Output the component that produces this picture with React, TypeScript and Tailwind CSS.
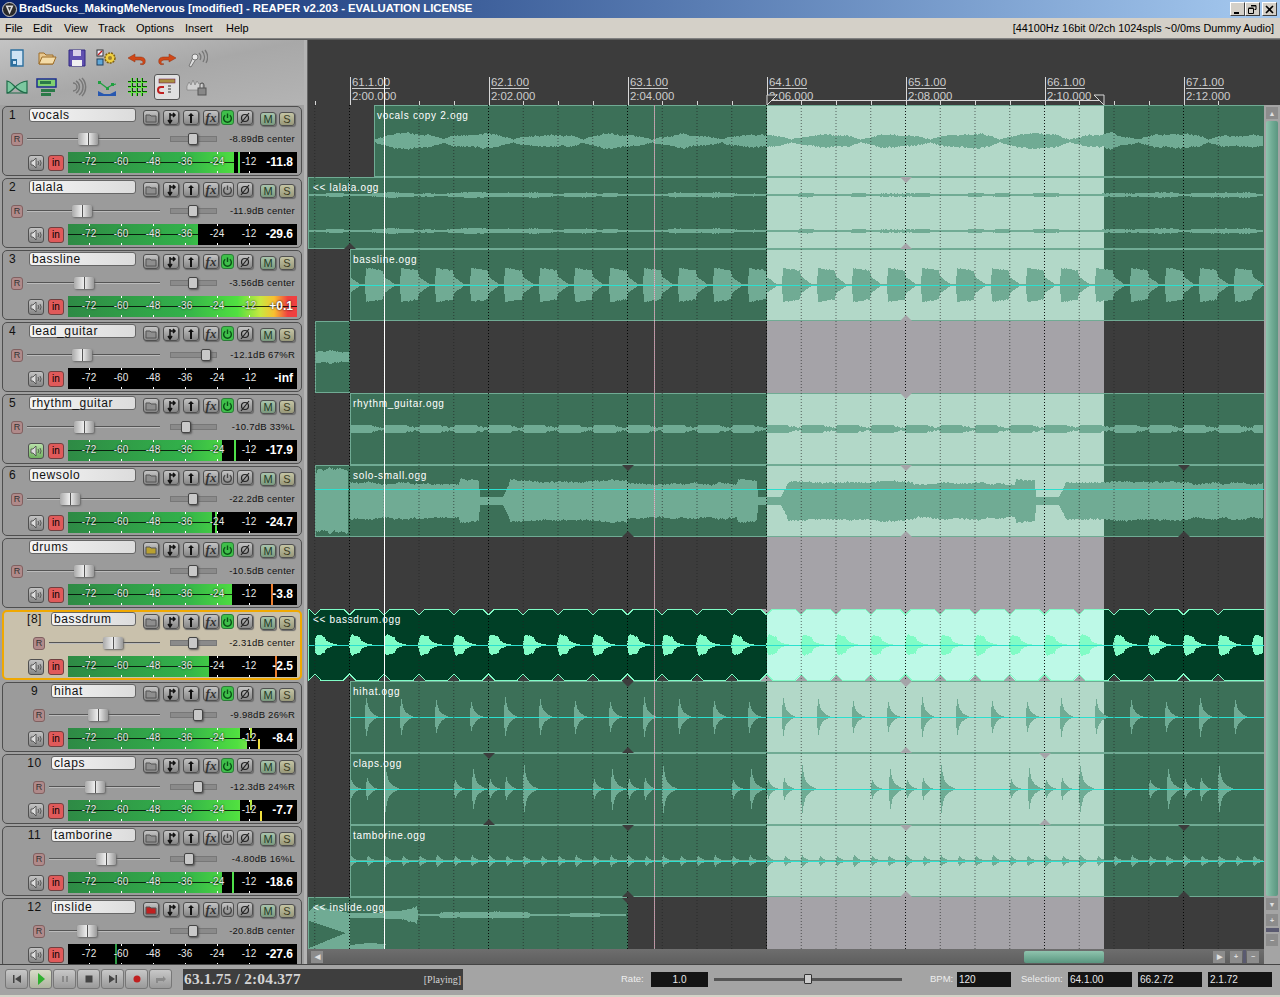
import type { ReactNode } from "react";

const X0 = 308;
const BEAT = 34.75;
const FIRST = 349.5;
const SEL_A = 767;
const SEL_B = 1104;

type Track = {
  n: number;
  name: string;
  child?: boolean;
  fader: number;
  pan: number;
  text: string;
  power: boolean;
  level: number;
  low?: number;
  peak?: number;
  peakColor?: string;
  peakTop?: number;
  value: string;
  hot?: boolean;
  folder?: string;
  spk?: boolean;
  sel?: boolean;
};

const tracks: Track[] = [
  { n: 1, name: "vocals", fader: 88, pan: 193, text: "-8.89dB center", power: true, level: 234, peak: 238, peakColor: "#4fe04a", value: "-11.8" },
  { n: 2, name: "lalala", fader: 82, pan: 193, text: "-11.9dB center", power: false, level: 198, value: "-29.6" },
  { n: 3, name: "bassline", fader: 84, pan: 193, text: "-3.56dB center", power: true, level: 297, value: "+0.1", hot: true },
  { n: 4, name: "lead_guitar", fader: 82, pan: 206, text: "-12.1dB 67%R", power: true, level: 68, value: "-inf" },
  { n: 5, name: "rhythm_guitar", fader: 84, pan: 186, text: "-10.7dB 33%L", power: true, level: 222, peak: 234, peakColor: "#4fe04a", value: "-17.9", spk: true },
  { n: 6, name: "newsolo", fader: 70, pan: 193, text: "-22.2dB center", power: false, level: 212, peak: 215, peakColor: "#4fe04a", value: "-24.7" },
  { n: 7, name: "drums", fader: 84, pan: 193, text: "-10.5dB center", power: true, level: 232, peak: 271, peakColor: "#f08030", value: "-3.8", folder: "#b8a030" },
  { n: 8, name: "bassdrum", child: true, fader: 113, pan: 193, text: "-2.31dB center", power: true, level: 209, peak: 275, peakColor: "#f08030", value: "-2.5", sel: true },
  { n: 9, name: "hihat", child: true, fader: 98, pan: 198, text: "-9.98dB 26%R", power: true, level: 240, low: 247, peak: 258, peakTop: 250, peakColor: "#f0e040", value: "-8.4" },
  { n: 10, name: "claps", child: true, fader: 95, pan: 198, text: "-12.3dB 24%R", power: true, level: 240, peak: 260, peakTop: 250, peakColor: "#f0e040", value: "-7.7" },
  { n: 11, name: "tamborine", child: true, fader: 106, pan: 189, text: "-4.80dB 16%L", power: false, level: 222, peak: 232, peakColor: "#4fe04a", value: "-18.6" },
  { n: 12, name: "inslide", child: true, fader: 87, pan: 193, text: "-20.8dB center", power: false, level: 68, peak: 115, peakColor: "#2e9a45", value: "-27.6", folder: "#c02020" },
];

const noise = (i: number) => {
  const s = Math.sin(i * 12.9898) * 43758.5453;
  return s - Math.floor(s);
};
const smooth = (x: number, w: number) => {
  const a = Math.floor(x / w);
  const f = x / w - a;
  const k = f * f * (3 - 2 * f);
  return noise(a) * (1 - k) + noise(a + 1) * k;
};
const phase = (x: number, start: number, period: number) => ((x - start) % period + period) % period;

type Wave = { cy: number; x0: number; x1: number; amp: (x: number) => number; jit?: number };

const wavePoints = (w: Wave) => {
  const top: string[] = [];
  const bot: string[] = [];
  for (let x = w.x0; x <= w.x1; x++) {
    const a = Math.max(0, w.amp(x));
    const j = w.jit ?? 0.2;
    top.push(`${x - X0},${Math.round(w.cy - a * (1 - j / 2 + j * noise(x)))}`);
    bot.unshift(`${x - X0},${Math.round(w.cy + a * (1 - j / 2 + j * noise(x + 500)))}`);
  }
  return [...top, ...bot].join(" ");
};

const vocal = (x: number) => {
  const p = phase(x, 374, 69.5);
  return 1 + 7 * Math.pow(Math.sin((Math.PI * p) / 69.5), 0.6) * (0.55 + 0.5 * smooth(x, 11));
};
const thin = (x: number) => 0.8 + 2 * smooth(x, 13);
const bass = (x: number) => {
  const p = phase(x, 366, BEAT);
  if (p < 18) return 17 - p * 0.15;
  if (p < 28) return 7 * (1 - (p - 18) / 10) + 1;
  return 1;
};
const rhythm = (x: number) => {
  const p = phase(x, 350, BEAT);
  return p < 22 ? 4 : p < 28 ? 2.5 : 1.5;
};
const solo = (x: number) => {
  const p = phase(x, 350, 278);
  if (p < 110) return 16 + 3 * smooth(x, 9);
  if (p < 130) return 22 - (p - 110) * 0.1;
  if (p < 153) return 4;
  if (p < 160) return 4 + (p - 153) * 2;
  return 18 + 3 * smooth(x, 17);
};
const kick = (x: number) => {
  const p = phase(x, 314.75, BEAT);
  if (p < 2) return 5 + p * 3;
  if (p < 11) return 11 - p * 0.3;
  if (p < 24) return 4 * Math.pow(1 - (p - 11) / 13, 2) + 0.4;
  return 0;
};
const hit = (p: number, a: number, len: number) => {
  if (p < 0 || p > len) return 0;
  return a * Math.exp(-p / 2.4) + (a * 0.22 * (len - p)) / len;
};
const hihat = (x: number) => hit(phase(x, 366, BEAT), 19, 13);
const clapAt = [0, 18, 87.5, 105.5, 122.5];
const claps = (x: number) => {
  const p = phase(x, 367, 139);
  let v = 0;
  for (const c of clapAt) {
    const small = c === 0 || c === 87.5 || c === 122.5;
    v = Math.max(v, hit(p - c, small ? 11 : 23, small ? 11 : 15));
  }
  return v;
};
const tamb = (x: number) => {
  const p = phase(x, 350, BEAT / 2);
  return 0.6 + 6 * Math.exp(-p / 3);
};
const inslide = (x: number) => {
  if (x < 384) return 2;
  if (x < 400) return 4;
  if (x < 418) return 4 + (x - 400) * 0.25;
  if (x < 440) return 1;
  if (x < 530) return 2.5 + smooth(x, 9);
  if (x < 570) return 0.6;
  if (x < 600) return 2;
  return 0.6;
};

const laneData: {
  item?: { x: number; label: string; end?: number };
  waves: Wave[];
  center?: number;
  sel?: boolean;
}[] = [
  { item: { x: 374, label: "vocals copy 2.ogg" }, waves: [{ cy: 36, x0: 374, x1: 1263, amp: vocal, jit: 0.3 }] },
  {
    item: { x: 308, label: "<< lalala.ogg" },
    waves: [
      { cy: 18, x0: 308, x1: 1263, amp: thin },
      { cy: 54, x0: 308, x1: 1263, amp: thin },
    ],
  },
  { item: { x: 350, label: "bassline.ogg" }, center: 36, waves: [{ cy: 36, x0: 350, x1: 1263, amp: bass, jit: 0.08 }] },
  { item: { x: 315, end: 350, label: "" }, waves: [{ cy: 36, x0: 315, x1: 349, amp: (x) => 4 + 3 * smooth(x, 6) }] },
  { item: { x: 350, label: "rhythm_guitar.ogg" }, waves: [{ cy: 36, x0: 350, x1: 1263, amp: rhythm, jit: 0.15 }] },
  {
    item: { x: 315, label: "" },
    center: 24,
    waves: [
      { cy: 36, x0: 315, x1: 348, amp: (x) => 30 + 4 * smooth(x, 5), jit: 0.15 },
      { cy: 36, x0: 350, x1: 1263, amp: solo, jit: 0.1 },
    ],
  },
  { waves: [] },
  { item: { x: 308, label: "<< bassdrum.ogg" }, center: 36, sel: true, waves: [{ cy: 36, x0: 315, x1: 1263, amp: kick, jit: 0.12 }] },
  { item: { x: 350, label: "hihat.ogg" }, center: 36, waves: [{ cy: 36, x0: 350, x1: 1263, amp: hihat, jit: 0.1 }] },
  { item: { x: 350, label: "claps.ogg" }, center: 36, waves: [{ cy: 36, x0: 350, x1: 1263, amp: claps, jit: 0.1 }] },
  { item: { x: 350, label: "tamborine.ogg" }, center: 36, waves: [{ cy: 36, x0: 350, x1: 1263, amp: tamb, jit: 0.1 }] },
  { item: { x: 308, end: 628, label: "<< inslide.ogg" }, waves: [{ cy: 18, x0: 350, x1: 626, amp: inslide }] },
];

const beats: number[] = [];
for (let i = -1; i < 26; i++) beats.push(FIRST + i * BEAT);

// little fade handles on the item edges: [x, y, up?]
const notches: [number, number, boolean][] = [
  [350, 72, true], [350, 144, true], [906, 144, true], [906, 72, false], [906, 216, true], [906, 288, false],
  [628, 360, false], [906, 360, false], [1184, 360, false], [628, 432, true], [906, 432, true], [1184, 432, true],
  [628, 576, false], [906, 576, false], [628, 648, true], [906, 648, true], [489, 648, false], [1045, 648, false],
  [489, 720, true], [1045, 720, true], [628, 720, false], [906, 720, false], [1184, 720, false], [628, 792, true],
  [906, 792, true], [1184, 792, true], [628, 793, false],
];

function Lane({ index }: { index: number }) {
  const lane = laneData[index];
  const item = lane.item;
  const end = item?.end ?? 1264;
  const start = item?.x ?? 0;
  const sa = Math.max(SEL_A, start);
  const sb = Math.min(SEL_B, end);
  const light = lane.sel ? "#bdf9e7" : "#b2d8c8";
  return (
    <div className="relative h-[72px] w-[956px] shrink-0 overflow-hidden">
      <div className="absolute top-0 bottom-0 left-[459px] w-[337px] bg-[#a5a3a8]" />
      {item && (
        <div
          className={`absolute top-0 h-[72px] border-y border-l ${lane.sel ? "bg-[#003f26] border-[#80fcc6]" : "bg-[#3c7058] border-[#70ab94]"}`}
          style={{ left: start - X0, width: end - start }}
        />
      )}
      {item && sb > sa && (
        <div
          className={`absolute top-0 h-[72px] border-y ${lane.sel ? "border-[#80fcc6]" : "border-[#70ab94]"}`}
          style={{ left: sa - X0, width: sb - sa, backgroundColor: light }}
        />
      )}
      <svg className="absolute inset-0" width={956} height={72} shapeRendering="crispEdges">
        {lane.waves.map((w, i) => (
          <polygon key={i} points={wavePoints(w)} fill={lane.sel ? "#80fcc6" : "#70ab94"} />
        ))}
        {lane.center !== undefined && item && (
          <line x1={start - X0} x2={956} y1={lane.center + 0.5} y2={lane.center + 0.5} stroke="#2be0d0" strokeWidth={1} />
        )}
        {index === 11 && (
          <g fill="#70ab94">
            <polygon points="1,14 8,8 20,12 42,16 42,25 38,36 1,24" />
            <polygon points="1,51 38,36 42,24 42,52 1,52" />
            <polygon points="42,48 60,46 78,47 76,52 42,52" />
            <polygon points="42,16 76,16 76,21 42,21" />
          </g>
        )}
        {lane.sel &&
          beats.map((b) => {
            const bg = b > SEL_A - 1 && b < SEL_B + 1 ? "#a5a3a8" : "#3c3c3c";
            const x = b - X0;
            return (
              <g key={b}>
                <polygon points={`${x - 6},0 ${x + 6},0 ${x},6`} fill={bg} />
                <polygon points={`${x - 6},72 ${x + 6},72 ${x},66`} fill={bg} />
                <polyline points={`${x - 6},0 ${x},6 ${x + 6},0`} fill="none" stroke="#80fcc6" />
                <polyline points={`${x - 6},71 ${x},65 ${x + 6},71`} fill="none" stroke="#80fcc6" />
              </g>
            );
          })}
      </svg>
      {item && item.label && (
        <span
          className="absolute top-[4px] text-[10px] leading-[13px] tracking-[0.68px] text-white whitespace-nowrap"
          style={{ left: start - X0 + (item.x === 308 ? 5 : 3) }}
        >
          {item.label}
        </span>
      )}
      {index === 5 && (
        <span className="absolute top-[4px] left-[45px] text-[10px] leading-[13px] tracking-[0.68px] text-white whitespace-nowrap">
          solo-small.ogg
        </span>
      )}
    </div>
  );
}

function GridOverlay() {
  return (
    <svg className="absolute inset-0 pointer-events-none" width={956} height={844}>
      {beats.map((b, i) => (
        <line
          key={b}
          x1={b - X0}
          x2={b - X0}
          y1={0}
          y2={844}
          stroke={(i - 1) % 4 === 0 ? "#000" : "#222"}
          strokeOpacity={(i - 1) % 4 === 0 ? 0.9 : 0.65}
          strokeDasharray="1 2"
        />
      ))}
      {notches.map(([x, y, up], i) => {
        const fill = x > SEL_A && x < SEL_B ? "#a5a3a8" : "#3c3c3c";
        const px = x - X0;
        return (
          <polygon
            key={i}
            fill={fill}
            points={up ? `${px - 6},${y} ${px + 6},${y} ${px},${y - 6}` : `${px - 6},${y} ${px + 6},${y} ${px},${y + 6}`}
          />
        );
      })}
      <line x1={346.5} x2={346.5} y1={0} y2={844} stroke="#d08aa4" strokeDasharray="1 1" />
      <line x1={346.5} x2={346.5} y1={0} y2={844} stroke="#e8e8e8" strokeDasharray="1 1" strokeDashoffset={1} strokeOpacity={0.6} />
      <line x1={76.5} x2={76.5} y1={0} y2={844} stroke="#fff" />
    </svg>
  );
}

function Ruler() {
  const measures = [0, 1, 2, 3, 4, 5, 6];
  return (
    <div className="relative h-[65px] bg-[#3c3c3c] text-[#cccccc] text-[11.4px] leading-[12px]">
      {measures.map((m) => (
        <div key={m} className="absolute top-[36px]" style={{ left: 44 + m * 139 }}>
          <div className="border-b border-[#cccccc] w-fit">{`${61 + m}.1.00`}</div>
          <div className="mt-[1px]">{`2:${String(m * 2).padStart(2, "0")}.000`}</div>
        </div>
      ))}
      <svg className="absolute inset-0" width={972} height={65} shapeRendering="crispEdges">
        {beats.map((b, i) =>
          (i - 1) % 4 === 0 ? (
            <line key={b} x1={b - X0 + 0.5} x2={b - X0 + 0.5} y1={37} y2={65} stroke="#d8d8d8" />
          ) : (
            <line key={b} x1={b - X0 + 0.5} x2={b - X0 + 0.5} y1={61} y2={65} stroke="#d8d8d8" />
          ),
        )}
        <line x1={76.5} x2={76.5} y1={37} y2={65} stroke="#fff" />
        <line x1={459} x2={796} y1={60.5} y2={60.5} stroke="#d8d8d8" />
        <polygon points="796,65 786,55 796,55" fill="#3c3c3c" stroke="#d8d8d8" shapeRendering="auto" />
        <polygon points="459,65 469,55 459,55" fill="#3c3c3c" stroke="#d8d8d8" shapeRendering="auto" />
      </svg>
    </div>
  );
}

function Btn({ className = "", children }: { className?: string; children?: ReactNode }) {
  return (
    <div
      className={`flex h-[15px] w-[16px] shrink-0 items-center justify-center rounded-[3px] border border-[#505050] bg-gradient-to-b from-[#c4c4c4] to-[#868686] shadow-[1px_1px_1px_#6a6a6a] ${className}`}
    >
      {children}
    </div>
  );
}

const icon12 = { width: 12, height: 12, viewBox: "0 0 12 12" };

function TrackPanel({ t }: { t: Track }) {
  const left = t.child ? 22 : 0;
  const faderW = t.child ? 111 : 133;
  const faderStart = t.child ? 49 : 27;
  return (
    <div className="h-[72px] shrink-0 px-[2px] pt-[1px]">
      <div
        className={`relative h-[70px] w-[300px] rounded-[5px] ${
          t.sel ? "border-2 border-[#f0a800] bg-[#c9c1ac]" : "border border-[#4e4e4e] p-px bg-[#9b9b9b]"
        }`}
      >
        <div className="flex h-[18px] items-start">
          <div className={`shrink-0 text-[12px] leading-[15px] text-[#111] tracking-[0.5px] ${t.child ? "w-[47px] text-center pl-[14px]" : "w-[25px] pl-[5px]"}`}>
            {t.sel ? `[${t.n}]` : t.n === 7 ? "" : t.n}
          </div>
          <div
            className={`h-[14px] shrink-0 rounded-[3px] border border-[#666] bg-gradient-to-r from-[#f4f4f4] to-[#dcdcdc] pl-[2px] text-[12px] leading-[12px] tracking-[0.6px] text-[#111] ${t.child ? "w-[85px]" : "w-[107px]"}`}
          >
            {t.name}
          </div>
          <div className="flex items-start pt-[2px]">
            <Btn className="ml-[7px]">
              <svg {...icon12}>
                <path d="M1 3h4l1 1h5v6H1z" fill={t.folder ?? "#8e8e8e"} stroke="#555" />
              </svg>
            </Btn>
            <Btn className="ml-[4px]">
              <svg {...icon12}>
                <path d="M5 1v9M3 8l2 3 2-3M5 3h5M8 1l2 2-2 2" fill="none" stroke="#111" strokeWidth="1.5" />
              </svg>
            </Btn>
            <Btn className="ml-[4px]">
              <svg {...icon12}>
                <path d="M6 1l3 3H7v7H5V4H3z" fill="#111" />
              </svg>
            </Btn>
            <Btn className="ml-[4px]">
              <span className="font-['Liberation_Serif',serif] text-[13px] italic font-bold leading-none text-[#333]">fx</span>
            </Btn>
            <div
              className={`ml-[2px] flex h-[15px] w-[13px] shrink-0 items-center justify-center rounded-[3px] border ${
                t.power ? "border-[#2c7a38] bg-[#3fc04a]" : "border-[#505050] bg-gradient-to-b from-[#c4c4c4] to-[#868686]"
              }`}
            >
              <svg width={12} height={12} viewBox="0 0 12 12">
                <path d="M3.5 3a4.2 4.2 0 1 0 5 0M6 1v5" fill="none" stroke={t.power ? "#0b4d16" : "#444"} strokeWidth="1.5" />
              </svg>
            </div>
            <Btn className="ml-[3px]">
              <svg {...icon12}>
                <circle cx="6" cy="6" r="3.5" fill="none" stroke="#222" strokeWidth="1.2" />
                <path d="M2 11L10 1" stroke="#222" strokeWidth="1.2" />
              </svg>
            </Btn>
            <Btn className="ml-[7px] mt-[2px] !h-[14px] !from-[#a8c4ac] !to-[#7a987e]">
              <span className="text-[11px] leading-none text-[#1f3a24]">M</span>
            </Btn>
            <Btn className="ml-[3px] mt-[2px] !h-[14px] !from-[#c4c4a4] !to-[#98987a]">
              <span className="text-[11px] leading-none text-[#3a3a1f]">S</span>
            </Btn>
          </div>
        </div>
        <div className="mt-[6px] flex h-[14px] items-center">
          <div
            className="flex h-[13px] w-[12px] shrink-0 items-center justify-center rounded-[3px] border border-[#806060] bg-[#b08a8a] text-[9px] leading-none text-[#333]"
            style={{ marginLeft: 7 + left }}
          >
            R
          </div>
          <div className="relative ml-[4px] flex h-[14px] shrink-0 items-center" style={{ width: faderW }}>
            <div className="h-[2px] w-full bg-[#555] border-b border-[#bbb]" />
            <div
              className="absolute top-[1px] h-[12px] w-[20px] rounded-[2px] bg-gradient-to-r from-[#aaa] via-[#f0f0f0] to-[#999] shadow-[1px_1px_2px_#666]"
              style={{ left: t.fader - faderStart - 10 }}
            >
              <div className="mx-auto h-full w-px bg-[#555]" />
            </div>
          </div>
          <div className="relative ml-[10px] h-[6px] w-[47px] shrink-0 border border-[#777] bg-[#8a8a8a]">
            <div
              className="absolute -top-[4px] h-[12px] w-[10px] rounded-[2px] border border-[#444] bg-[#c8c8c8] shadow-[1px_1px_2px_#555]"
              style={{ left: t.pan - 170 - 6 }}
            />
          </div>
          <div className="flex-1 pr-[5px] text-right text-[9.5px] tracking-[0.25px] text-[#111] whitespace-nowrap">{t.text}</div>
        </div>
        <div className="mt-[6px] flex h-[21px] items-center">
          <div
            className={`ml-[24px] flex h-[16px] w-[16px] shrink-0 items-center justify-center rounded-[3px] border border-[#505050] bg-gradient-to-b ${
              t.spk ? "from-[#b8e0a8] to-[#70b060]" : "from-[#c4c4c4] to-[#868686]"
            }`}
          >
            <svg {...icon12}>
              <path d="M1 4h2l3-3v10L3 8H1z" fill="#ddd" stroke="#444" strokeWidth=".8" />
              <path d="M8 4a3 3 0 0 1 0 4M10 3a5 5 0 0 1 0 6" fill="none" stroke="#444" strokeWidth=".8" />
            </svg>
          </div>
          <div className="ml-[4px] flex h-[16px] w-[16px] shrink-0 items-center justify-center rounded-[3px] border border-[#704040] bg-[#e05a5a] text-[10px] leading-none text-black">
            in
          </div>
          <Meter t={t} />
        </div>
      </div>
    </div>
  );
}

const meterLabels = ["-72", "-60", "-48", "-36", "-24", "-12"];

function Meter({ t }: { t: Track }) {
  const w = t.level - 68;
  const hotBg = "bg-[linear-gradient(to_right,#2e8a45_0%,#32b04a_50%,#50e040_74%,#c8e840_84%,#f8c030_90%,#f04040_96%)]";
  const bg = "bg-[linear-gradient(to_right,#2e8a45_0%,#32b04a_50%,#50e040_74%,#90e850_82%,#d8e840_90%)]";
  return (
    <div className="relative ml-[4px] h-[21px] w-[229px] shrink-0 overflow-hidden bg-black">
      <div className="absolute left-0 top-0 h-full overflow-hidden" style={{ width: w }}>
        <div className={`h-full w-[229px] ${t.hot ? hotBg : bg}`} />
        <div className="absolute left-0 right-0 top-[10px] h-px bg-black/80" />
      </div>
      {t.low && (
        <div className="absolute bottom-0 left-0 h-[10px] overflow-hidden" style={{ width: t.low - 68 }}>
          <div className={`h-full w-[229px] ${bg}`} />
        </div>
      )}
      {t.peak && !t.peakTop && (
        <div className="absolute top-0 h-full w-[2px]" style={{ left: t.peak - 68, backgroundColor: t.peakColor }} />
      )}
      {t.peak && t.peakTop && (
        <>
          <div className="absolute bottom-0 h-[10px] w-[2px]" style={{ left: t.peak - 68, backgroundColor: t.peakColor }} />
          <div className="absolute top-0 h-[10px] w-[2px] bg-[#b8e840]" style={{ left: t.peakTop - 68 }} />
        </>
      )}
      {meterLabels.map((l, i) => (
        <div key={l} className="absolute inset-y-0 w-[24px]" style={{ left: 9 + i * 32 }}>
          <div className="absolute left-[12px] top-0 h-[2px] w-px bg-white" />
          <div className="absolute bottom-0 left-[12px] h-[2px] w-px bg-white" />
          <div className="absolute inset-x-0 top-[4px] text-center text-[10px] leading-[12px] text-[#e8e8e8] [text-shadow:0_0_2px_#000]">{l}</div>
        </div>
      ))}
      <div className="absolute right-[4px] top-[3px] text-[12px] font-bold leading-[14px] text-white [text-shadow:0_0_2px_#000]">{t.value}</div>
    </div>
  );
}

function ToolIcon({ i }: { i: number }) {
  const s = { width: 22, height: 22, viewBox: "0 0 22 22" };
  switch (i) {
    case 0:
      return (
        <svg {...s}>
          <path d="M5 3h12v16H5z" fill="#cfe3f4" stroke="#2d6f9e" strokeWidth="1.4" />
          <path d="M5 12h6v7H5z" fill="#2d6f9e" />
          <path d="M7 14h3v3H7z" fill="#cfe3f4" />
        </svg>
      );
    case 1:
      return (
        <svg {...s}>
          <path d="M3 17V6h5l2 2h7v9z" fill="#e8c890" stroke="#9c6c28" />
          <path d="M3 17l3-7h14l-3 7z" fill="#f4dca8" stroke="#9c6c28" />
        </svg>
      );
    case 2:
      return (
        <svg {...s}>
          <path d="M3 3h16v16H3z" fill="#6050b0" stroke="#302880" />
          <path d="M7 3h8v6H7z" fill="#d8d0e8" />
          <path d="M6 13h10v6H6z" fill="#f0f0f0" />
        </svg>
      );
    case 3:
      return (
        <svg {...s}>
          <rect x="1" y="3" width="6" height="6" fill="#eef" stroke="#333" />
          <path d="M2 8l4-4" stroke="#c02020" strokeWidth="1.5" />
          <rect x="1" y="12" width="6" height="6" fill="#60a8d8" stroke="#204060" />
          <circle cx="14" cy="11" r="5" fill="#f0d040" stroke="#806010" strokeWidth="1.5" strokeDasharray="2 1" />
          <circle cx="14" cy="11" r="2" fill="#a08030" />
        </svg>
      );
    case 4:
      return (
        <svg {...s}>
          <path d="M2 11l7-4v3h5c4 0 6 2 5 6-1 2-3 2-5 1 2 0 3-1 3-2s-2-2-3-2H9v2z" fill="#d04818" stroke="#903010" strokeWidth=".5" />
        </svg>
      );
    case 5:
      return (
        <svg {...s}>
          <path d="M20 11l-7-4v3H8c-4 0-6 2-5 6 1 2 3 2 5 1-2 0-3-1-3-2s2-2 3-2h5v2z" fill="#d04818" stroke="#903010" strokeWidth=".5" />
        </svg>
      );
    case 6:
      return (
        <svg {...s}>
          <path d="M3 19l4-9 3 2-5 8z" fill="#ddd" stroke="#777" />
          <circle cx="9" cy="10" r="3" fill="#e8e8e8" stroke="#777" />
          <path d="M13 6a6 6 0 0 1 1 7M16 4a9 9 0 0 1 1 11M19 3a12 12 0 0 1 1 13" fill="none" stroke="#777" strokeWidth="1.3" />
        </svg>
      );
    case 7:
      return (
        <svg {...s}>
          <path d="M1 5c7 1 8 11 20 12V5c-12 1-13 11-20 12z" fill="#7cc8a0" stroke="#1f6a48" strokeWidth="1.2" />
          <path d="M1 17h20" stroke="#1f6a48" />
        </svg>
      );
    case 8:
      return (
        <svg {...s}>
          <rect x="1" y="3" width="19" height="8" fill="#80d070" stroke="#1c2c90" strokeWidth="1.5" />
          <rect x="4" y="5" width="11" height="3" fill="#2a7a48" />
          <rect x="5" y="13" width="14" height="3" fill="#2a7a48" />
          <rect x="5" y="17" width="10" height="3" fill="#2a7a48" />
        </svg>
      );
    case 9:
      return (
        <svg {...s}>
          <path d="M10 5a7 7 0 0 1 0 12M13 3a10 10 0 0 1 0 16M7 7a4 4 0 0 1 0 8M16 2a13 13 0 0 1 0 18" fill="none" stroke="#777" strokeWidth="1.5" />
        </svg>
      );
    case 10:
      return (
        <svg {...s}>
          <path d="M2 15l6 3 6 0 6-3v5H2z" fill="#2858b0" />
          <path d="M3 6l8 6 5-3 4-1" fill="none" stroke="#20a040" strokeWidth="1.2" />
          <rect x="2" y="5" width="3" height="3" fill="#20a040" />
          <rect x="10" y="11" width="3" height="3" fill="#20a040" />
          <rect x="15" y="7" width="3" height="3" fill="#20a040" />
        </svg>
      );
    case 11:
      return (
        <svg {...s} shapeRendering="crispEdges">
          <path d="M5.5 2v18M10.5 2v18M15.5 2v18M1.5 6h19M1.5 11h19M1.5 16h19" stroke="#0a4a0a" strokeWidth="2" />
          <path d="M5.5 2v18M10.5 2v18M15.5 2v18M1.5 6h19M1.5 11h19M1.5 16h19" stroke="#60e040" strokeWidth="1" />
        </svg>
      );
    case 12:
      return (
        <div className="flex h-[26px] w-[26px] items-center justify-center rounded-[3px] border border-[#555] bg-[#e0e0e0]">
          <svg width={20} height={20} viewBox="0 0 20 20">
            <rect x="2" y="2" width="16" height="4" fill="#a89040" stroke="#604" strokeWidth=".5" />
            <path d="M4 9a4 4 0 0 0 0 8h3v-2H4a2 2 0 0 1 0-4h3V9z" fill="#c02020" />
            <path d="M11 9h3M11 12h3M11 15h3" stroke="#333" />
          </svg>
        </div>
      );
    default:
      return (
        <svg {...s}>
          <path d="M1 10l2-4 2 3 2-5 2 5 2-4 2 3 4-1v7H1z" fill="#d0d0d0" stroke="#777" strokeWidth=".6" />
          <rect x="12" y="12" width="8" height="7" fill="#888" stroke="#555" />
          <path d="M14 12V9a2 2 0 0 1 4 0v3" fill="none" stroke="#555" />
        </svg>
      );
  }
}

function Transport({ children, lit }: { children: ReactNode; lit?: boolean }) {
  return (
    <div
      className={`flex h-[20px] w-[23px] items-center justify-center rounded-[3px] border border-[#777] bg-gradient-to-b ${
        lit ? "from-[#d8dcc8] to-[#aeb4a0]" : "from-[#c8c8c8] to-[#9a9a9a]"
      }`}
    >
      <svg width={12} height={12} viewBox="0 0 12 12">
        {children}
      </svg>
    </div>
  );
}

const ScrollBtn = ({ children }: { children: ReactNode }) => (
  <div className="flex h-[12px] w-[12px] shrink-0 items-center justify-center bg-[#8c8c8c] text-[7px] font-bold leading-none text-[#e0e0e0]">
    {children}
  </div>
);

function BlackBox({ w, center, children }: { w: string; center?: boolean; children: ReactNode }) {
  return (
    <div className={`flex h-[15px] items-center bg-[#141414] text-[10px] text-[#e8e8e8] ${w} ${center ? "justify-center" : "pl-[2px]"}`}>
      {children}
    </div>
  );
}

export default function App() {
  return (
    <div className="flex h-[997px] w-[1280px] flex-col overflow-hidden bg-[#a4a4a4] font-['Liberation_Sans',sans-serif]">
      <div className="flex h-[18px] shrink-0 items-center bg-gradient-to-r from-[#0a246a] to-[#a6caf0] pl-[2px]">
        <svg width={15} height={15} viewBox="0 0 15 15">
          <circle cx="7.5" cy="7.5" r="7" fill="#2a2a2a" stroke="#ccc" />
          <path d="M3.5 3.5l8 0-4 9z" fill="#ddd" />
          <path d="M6 5l3 0-1.5 4z" fill="#444" />
        </svg>
        <span className="ml-[2px] text-[11.35px] font-bold leading-none text-white whitespace-nowrap">
          BradSucks_MakingMeNervous [modified] - REAPER v2.203 - EVALUATION LICENSE
        </span>
        <div className="ml-auto mr-[3px] flex items-center">
          {["min", "max", "close"].map((b) => (
            <div
              key={b}
              className={`flex h-[14px] w-[15px] items-center justify-center border border-t-white border-l-white border-r-[#404040] border-b-[#404040] bg-[#d4d0c8] ${b === "close" ? "ml-[2px]" : ""}`}
            >
              <svg width={9} height={9} viewBox="0 0 9 9">
                {b === "min" && <path d="M1 7h5v2H1z" fill="#000" />}
                {b === "max" && <path d="M3 .5h5v4H6.5M.5 3.5h5v5h-5z M.5 3h5 M3 1h5" fill="none" stroke="#000" />}
                {b === "close" && <path d="M1 1l7 7M8 1L1 8" stroke="#000" strokeWidth="1.6" />}
              </svg>
            </div>
          ))}
        </div>
      </div>

      <div className="flex h-[21px] shrink-0 items-center justify-between border-b border-[#808080] bg-[#d4d0c8] pl-[5px] pr-[6px] text-[11px] text-black">
        <div className="flex">
          {[
            ["File", "w-[28px]"],
            ["Edit", "w-[31px]"],
            ["View", "w-[34px]"],
            ["Track", "w-[38px]"],
            ["Options", "w-[49px]"],
            ["Insert", "w-[41px]"],
            ["Help", "w-[30px]"],
          ].map(([m, w]) => (
            <span key={m} className={w}>
              {m}
            </span>
          ))}
        </div>
        <span className="text-[10.85px]">[44100Hz 16bit 0/2ch 1024spls ~0/0ms Dummy Audio]</span>
      </div>

      <div className="flex h-[925px] shrink-0 border-t border-[#5a5a5a]">
        <div className="flex h-full w-[304px] shrink-0 flex-col overflow-hidden bg-[#a0a0a0]">
          <div className="h-[65px] shrink-0 bg-gradient-to-br from-[#c4c4c4] via-[#a8a8a8] to-[#b4b4b4] pl-[2px] pt-[3px]">
            <div className="grid grid-cols-[repeat(7,30px)]">
              {[0, 1, 2, 3, 4, 5, 6, 7, 8, 9, 10, 11, 12, 13].map((i) => (
                <div key={i} className="flex h-[29px] items-center justify-center">
                  <ToolIcon i={i} />
                </div>
              ))}
            </div>
          </div>
          {tracks.map((t) => (
            <TrackPanel key={t.n} t={t} />
          ))}
        </div>
        <div className="w-[4px] shrink-0 bg-[#b4b4b4] border-r border-[#666]" />

        <div className="flex w-[972px] shrink-0 flex-col">
          <Ruler />
          <div className="flex h-[844px] shrink-0">
            <div className="relative h-[844px] w-[956px] shrink-0 overflow-hidden bg-[#3c3c3c]">
              {laneData.map((_, i) => (
                <Lane key={i} index={i} />
              ))}
              <GridOverlay />
            </div>
            <div className="flex w-[16px] shrink-0 flex-col items-center bg-[#a4a4a4] pt-[2px]">
              <ScrollBtn>▲</ScrollBtn>
              <div className="mt-[2px] w-[12px] flex-1 rounded-[2px] bg-gradient-to-r from-[#8fc4ae] via-[#70ab94] to-[#5a9680]" />
              <div className="mt-[2px]">
                <ScrollBtn>▼</ScrollBtn>
              </div>
              <div className="mt-[4px]">
                <ScrollBtn>+</ScrollBtn>
              </div>
              <div className="my-[2px] h-[4px] w-[13px] bg-[#5a5a70]" />
              <ScrollBtn>−</ScrollBtn>
              <div className="h-[3px]" />
            </div>
          </div>
          <div className="flex h-[15px] shrink-0">
            <div className="flex w-[956px] shrink-0 items-center bg-gradient-to-b from-[#6e6e6e] to-[#5e5e5e] pl-[3px]">
              <ScrollBtn>◀</ScrollBtn>
              <div className="ml-[701px] h-[12px] w-[80px] rounded-[2px] bg-gradient-to-b from-[#8fc4ae] to-[#5a9680]" />
              <div className="ml-[109px]">
                <ScrollBtn>▶</ScrollBtn>
              </div>
              <div className="ml-[5px]">
                <ScrollBtn>+</ScrollBtn>
              </div>
              <div className="mx-[1px] h-[13px] w-[3px] bg-[#5a5a70]" />
              <ScrollBtn>−</ScrollBtn>
            </div>
            <div className="flex-1 bg-[#a4a4a4]" />
          </div>
        </div>
      </div>

      <div className="flex flex-1 items-center border-t border-[#444] bg-[#a4a4a4] pb-[2px] pl-[5px] border-b-2 border-b-[#d4d4c8]">
        <div className="flex w-[168px] shrink-0 gap-px">
          <Transport>
            <path d="M2 2h1.5v8H2zM10 2v8L4 6z" fill="#444" />
          </Transport>
          <Transport lit>
            <path d="M3 0v12l7-6z" fill="#30b030" />
          </Transport>
          <Transport>
            <path d="M3 3h2v6H3zM7 3h2v6H7z" fill="#8a8a8a" />
          </Transport>
          <Transport>
            <path d="M2.5 2.5h7v7h-7z" fill="#444" />
          </Transport>
          <Transport>
            <path d="M2 2v8l6-4zM8.5 2H10v8H8.5z" fill="#444" />
          </Transport>
          <Transport>
            <circle cx="6" cy="6" r="3.5" fill="#c02020" />
          </Transport>
          <Transport>
            <path d="M1 5h7V3l3 3-3 3V8H3v2H1z" fill="#8a8a8a" />
          </Transport>
        </div>
        <div className="ml-[10px] flex h-[21px] w-[280px] shrink-0 items-center justify-between bg-[#3e3e3e] pr-[2px] font-['Liberation_Serif',serif]">
          <span className="pl-[1px] text-[15.4px] font-bold tracking-[0.2px] text-[#d4d4d4]">63.1.75 / 2:04.377</span>
          <span className="text-[10px] text-[#d4d4d4]">[Playing]</span>
        </div>
        <span className="ml-[158px] w-[30px] text-[9.5px] text-[#eee]">Rate:</span>
        <BlackBox w="w-[57px]" center>
          1.0
        </BlackBox>
        <div className="relative ml-[6px] h-[3px] w-[188px] shrink-0 bg-[#555]">
          <div className="absolute -top-[4px] left-[90px] h-[10px] w-[8px] rounded-[1px] border border-[#333] bg-[#ccc]" />
        </div>
        <span className="ml-[28px] w-[27px] text-[9.5px] text-[#eee]">BPM:</span>
        <BlackBox w="w-[54px]">120</BlackBox>
        <span className="ml-[10px] w-[47px] text-[9.5px] text-[#eee]">Selection:</span>
        <BlackBox w="w-[64px]">64.1.00</BlackBox>
        <div className="w-[6px]" />
        <BlackBox w="w-[64px]">66.2.72</BlackBox>
        <div className="w-[6px]" />
        <BlackBox w="w-[64px]">2.1.72</BlackBox>
      </div>
    </div>
  );
}
